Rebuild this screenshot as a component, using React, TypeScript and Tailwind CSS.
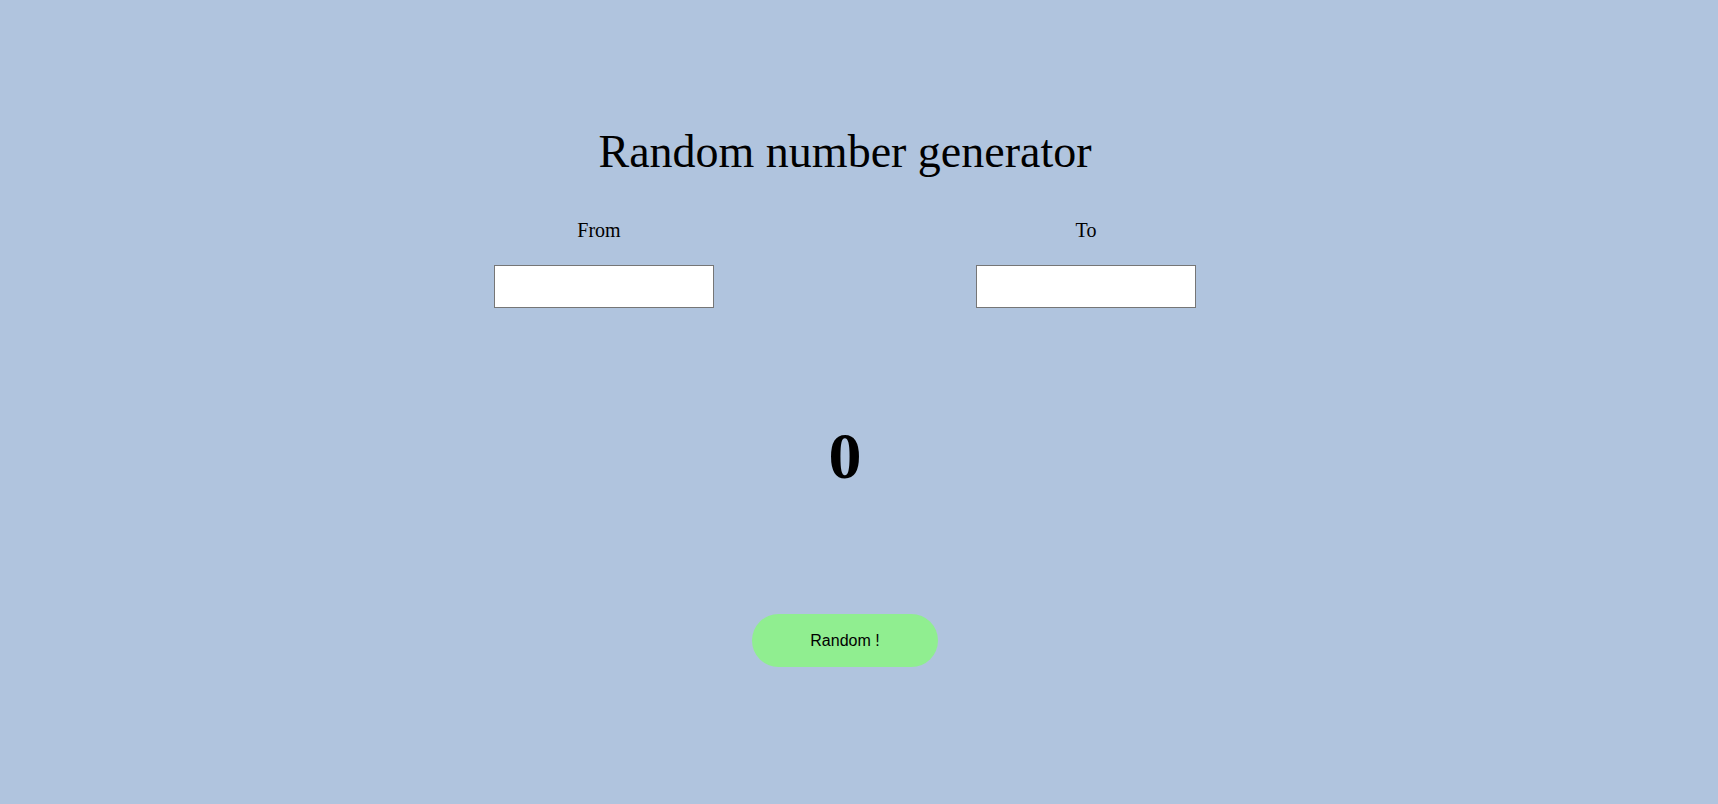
const App = () => {
  return (
    <div className="min-h-[804px] w-full bg-[#b0c4de] pr-[28px] font-['Liberation_Serif',serif] text-black">
      <div className="flex flex-col items-center pt-[124px]">
        <h1 className="text-[46px] leading-[56px]">Random number generator</h1>

        {/* inputs */}
        <div className="mt-[38px] flex gap-[262px]">
          <div className="flex w-[220px] flex-col items-center">
            <label className="pr-[10px] text-[20px] leading-[24px]">From</label>
            <input
              type="number"
              className="mt-[23px] h-[43px] w-[220px] border border-[#767676] bg-white px-2"
            />
          </div>
          <div className="flex w-[220px] flex-col items-center">
            <label className="text-[20px] leading-[24px]">To</label>
            <input
              type="number"
              className="mt-[23px] h-[43px] w-[220px] border border-[#767676] bg-white px-2"
            />
          </div>
        </div>

        <div className="mt-[100px] text-[66px] font-bold leading-[96px]">0</div>

        <button className="mt-[110px] h-[53px] w-[186px] rounded-full bg-[#90ee90] font-['Liberation_Sans',sans-serif] text-[16px]">
          Random !
        </button>
      </div>
    </div>
  );
};

export default App;
